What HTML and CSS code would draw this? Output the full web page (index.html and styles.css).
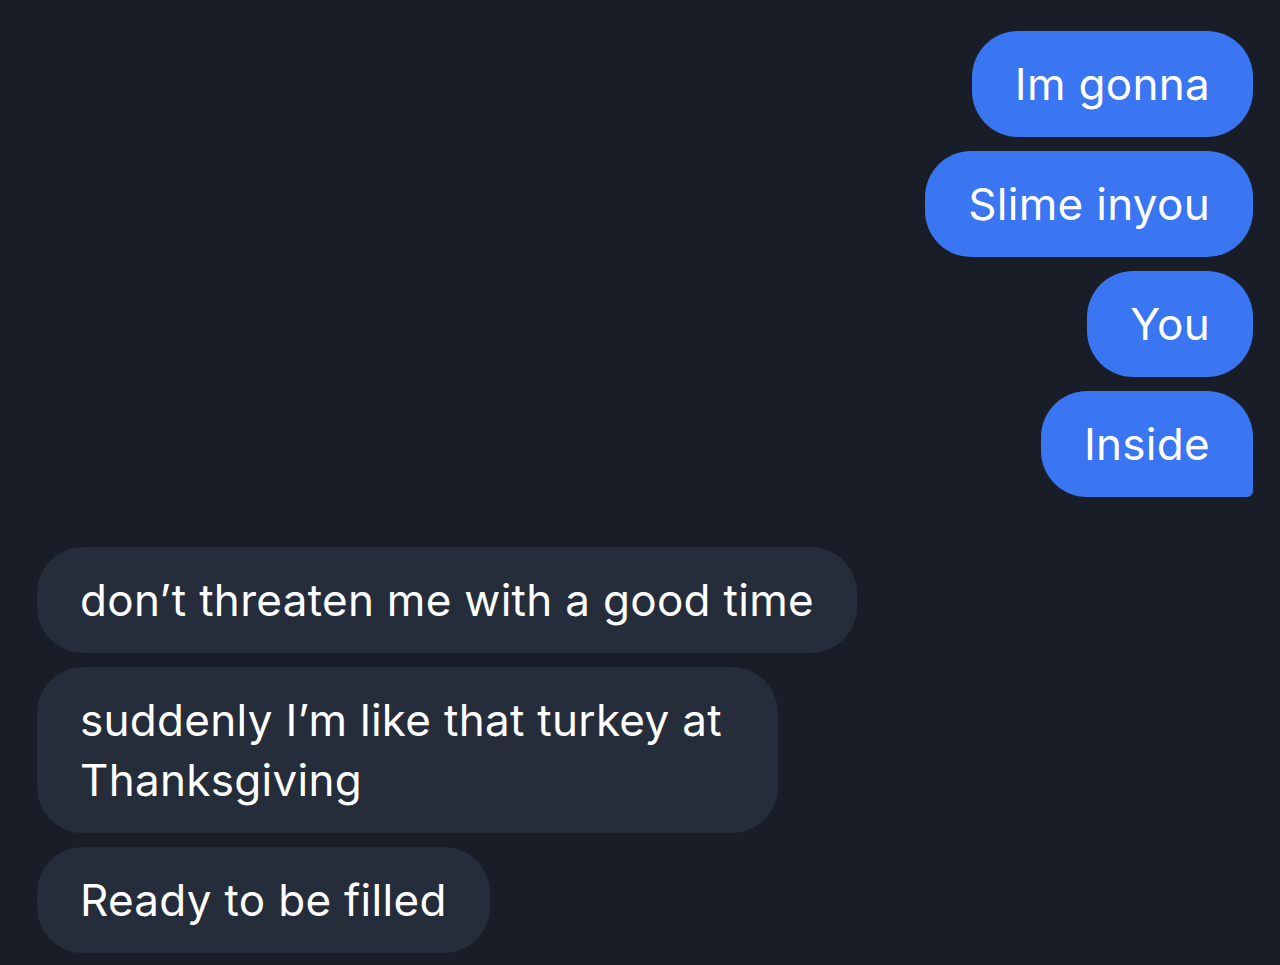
FILE: index.html
```html
<!DOCTYPE html>
<html>
<head>
<meta charset="utf-8">
<link rel="stylesheet" href="styles.css">
</head>
<body>
<div class="chat">
  <div class="group sent">
    <div class="bubble">Im gonna</div>
    <div class="bubble">Slime inyou</div>
    <div class="bubble">You</div>
    <div class="bubble last">Inside</div>
  </div>
  <div class="group received">
    <div class="bubble">don’t threaten me with a good time</div>
    <div class="bubble wrapped">suddenly I’m like that turkey at<br>Thanksgiving</div>
    <div class="bubble">Ready to be filled</div>
  </div>
</div>
</body>
</html>
```
FILE: styles.css
```css
html, body {
  margin: 0;
  padding: 0;
  background: #181d27;
  height: 100%;
  overflow: hidden;
}
.chat {
  display: flex;
  flex-direction: column;
  gap: 50px;
  padding: 31px 27px 0 37px;
  font-family: Inter, "Noto Sans", sans-serif;
  font-size: 44px;
  line-height: 60px;
  letter-spacing: 0.3px;
  color: #ffffff;
}
.group {
  display: flex;
  flex-direction: column;
  gap: 14px;
}
.sent { align-items: flex-end; }
.received { align-items: flex-start; }
.bubble {
  padding: 23px 43px;
  border-radius: 46px;
  white-space: nowrap;
}
.sent .bubble { background: #3a75f2; }
.sent .bubble.last { border-bottom-right-radius: 6px; }
.received .bubble { background: #252d3b; }
.received .bubble.wrapped { padding-right: 56px; }
```
